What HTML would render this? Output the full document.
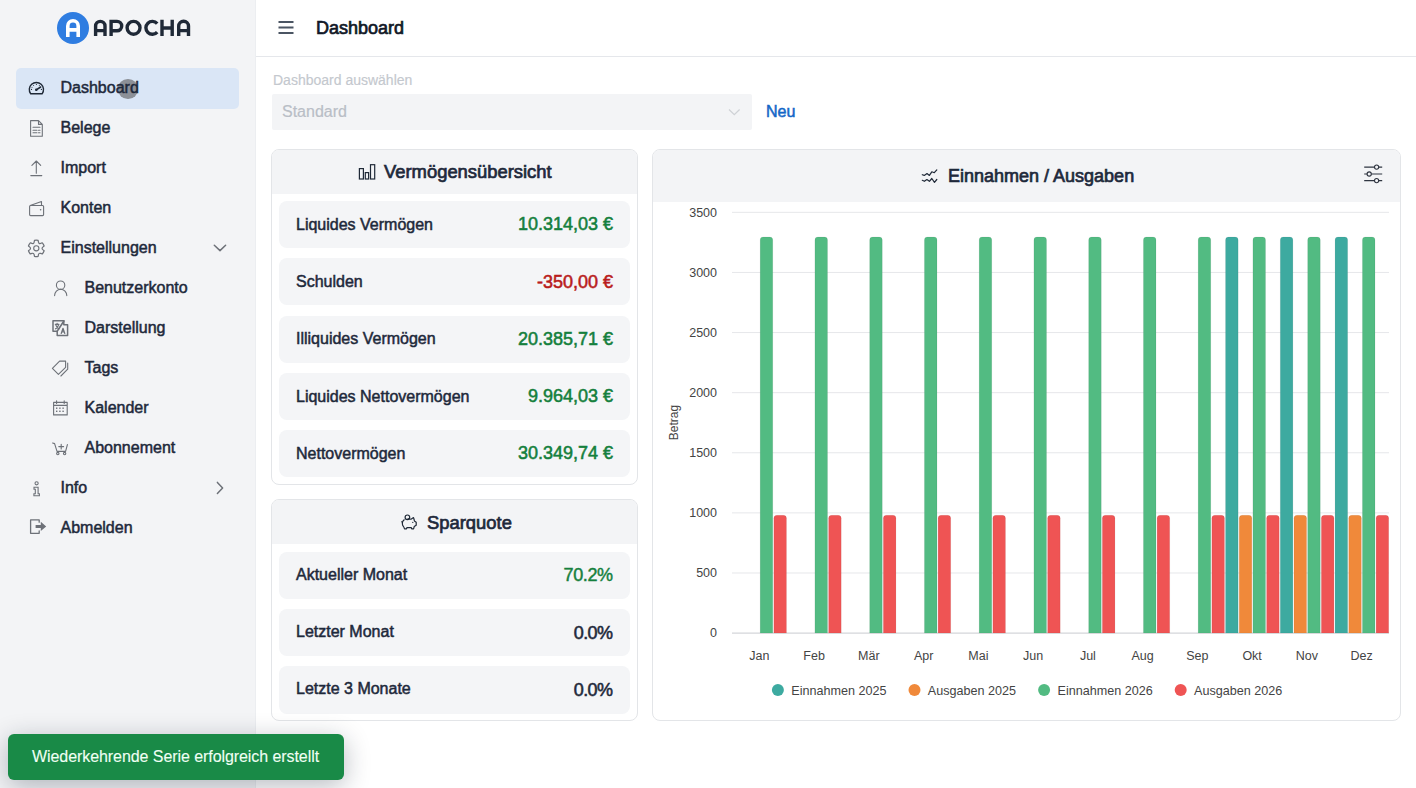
<!DOCTYPE html>
<html><head><meta charset="utf-8">
<style>
*{box-sizing:border-box;margin:0;padding:0}
html,body{width:1416px;height:788px;overflow:hidden;background:#fff;font-family:"Liberation Sans",sans-serif;color:#1f2937}
.abs{position:absolute}
.t{position:absolute;white-space:nowrap;-webkit-text-stroke:0.5px currentColor}
.sb6{-webkit-text-stroke:0.7px currentColor}
#sb{position:absolute;left:0;top:0;width:256px;height:788px;background:#f3f4f6;border-right:1px solid #eceef1}
.nav{position:absolute;left:60.5px;font-size:16px;line-height:20px;color:#1e293b;margin-top:1px}
.sub{left:84.5px}
.ico{position:absolute;overflow:visible}
#hdr{position:absolute;left:256px;top:0;width:1160px;height:57px;border-bottom:1px solid #e5e7eb;background:#fff}
.card{position:absolute;border:1px solid #e3e5e8;border-radius:8px;background:#fff;overflow:hidden}
.chd{position:absolute;left:0;top:0;right:0;background:#f3f4f6}
.item{position:absolute;left:7px;right:7px;height:47.2px;background:#f4f5f7;border-radius:8px}
.lab{position:absolute;left:17px;font-size:16px;line-height:20px;color:#1e293b}
.val{position:absolute;right:17px;font-size:18px;line-height:22px;-webkit-text-stroke:0.55px currentColor}
.g{color:#15803d}.r{color:#b91c1c}
</style></head><body>

<!-- SIDEBAR -->
<div id="sb">
  <!-- logo -->
  <svg class="ico" style="left:0;top:0" width="256" height="60" viewBox="0 0 256 60">
    <circle cx="73" cy="28" r="16" fill="#2f7de1"/>
    <path d="M67.8 37V26A5.2 5.2 0 0 1 78.2 26V37 M67.8 29.9H78.2" fill="none" stroke="#fff" stroke-width="3.6"/>
    <g fill="none" stroke="#1f2937" stroke-width="3.4">
      <path d="M95.6 36V26.1A4.7 4.7 0 0 1 105 26.1V36 M95.6 30.6H105"/>
      <path d="M111.1 36V21.4H117A4.7 4.7 0 0 1 117 30.8H111.1"/>
      <circle cx="133.55" cy="27.85" r="6.45"/>
      <path d="M157.2 23.6A6.45 6.45 0 1 0 157.2 32.1"/>
      <path d="M162 19.7V36 M172.2 19.7V36 M162 28H172.2"/>
      <path d="M178.7 36V26.1A4.7 4.7 0 0 1 188.5 26.1V36 M178.7 30.6H188.5"/>
    </g>
  </svg>
  <div class="abs" style="left:16px;top:68px;width:223px;height:41px;background:#dae6f6;border-radius:5px"></div>

  <div class="abs" style="left:118.3px;top:79px;width:19.6px;height:19.6px;border-radius:50%;background:#8c9097"></div>
  <div class="t nav" style="top:77px">Dashboard</div>
  <div class="t nav" style="top:117px">Belege</div>
  <div class="t nav" style="top:157px">Import</div>
  <div class="t nav" style="top:197px">Konten</div>
  <div class="t nav" style="top:237px">Einstellungen</div>
  <div class="t nav sub" style="top:277px">Benutzerkonto</div>
  <div class="t nav sub" style="top:317px">Darstellung</div>
  <div class="t nav sub" style="top:357px">Tags</div>
  <div class="t nav sub" style="top:397px">Kalender</div>
  <div class="t nav sub" style="top:437px">Abonnement</div>
  <div class="t nav" style="top:477px">Info</div>
  <div class="t nav" style="top:517px">Abmelden</div>

  <!-- icons -->
  <svg class="ico" style="left:0;top:0" width="256" height="560" viewBox="0 0 256 560" fill="none" stroke-linecap="round" stroke-linejoin="round">
    <!-- gauge -->
    <g stroke="#1f2937" stroke-width="1.4">
      <path d="M30.68 93.8A7.1 7.1 0 1 1 42.12 93.8Z"/>
      <path d="M36.3 89.8L40.6 87" stroke-width="1.6"/>
    </g>
    <circle cx="36.3" cy="89.8" r="1.3" fill="#1f2937"/>
    <g fill="#1f2937"><circle cx="36.4" cy="84.3" r=".6"/><circle cx="33.6" cy="85.4" r=".5"/><circle cx="39.3" cy="85.4" r=".5"/><circle cx="31.5" cy="89.4" r=".6"/><circle cx="41.4" cy="89.4" r=".6"/><circle cx="32" cy="87.2" r=".5"/></g>
    <g stroke="#6d7178" stroke-width="1.1">
      <!-- doc -->
      <path d="M30.6 120.6H38.5L42.3 124.4V136.3H30.6Z M38.5 120.6V124.4H42.3"/>
      <path d="M33 127.2H40 M33 130.3H37 M38.5 130.3H40 M33 132.8H37 M38.5 132.8H40"/>
      <!-- upload -->
      <path d="M36.3 161V173.3 M31.9 165.4L36.3 161L40.7 165.4 M30.8 175.6H41.8"/>
      <!-- wallet -->
      <path d="M29.6 206.5V214.6A1 1 0 0 0 30.6 215.6H42.6A1 1 0 0 0 43.6 214.6V206.5A1 1 0 0 0 42.6 205.5H30.6A1 1 0 0 0 29.6 206.5 M30.2 205.4L41.5 201.6V205.4"/>
    </g>
    <circle cx="40.6" cy="209.8" r=".8" fill="#6d7178"/>
    <!-- gear -->
    <g stroke="#6d7178" stroke-width="1.1">
      <path d="M34.15 242.16L34.46 240.41A8.20 8.20 0 0 1 38.14 240.41L38.45 242.16Q38.85 243.98 40.63 243.42L42.30 242.81A8.20 8.20 0 0 1 44.14 246.00L42.78 247.14Q41.40 248.40 42.78 249.66L44.14 250.80A8.20 8.20 0 0 1 42.30 253.99L40.63 253.38Q38.85 252.82 38.45 254.64L38.14 256.39A8.20 8.20 0 0 1 34.46 256.39L34.15 254.64Q33.75 252.82 31.97 253.38L30.30 253.99A8.20 8.20 0 0 1 28.46 250.80L29.82 249.66Q31.20 248.40 29.82 247.14L28.46 246.00A8.20 8.20 0 0 1 30.30 242.81L31.97 243.42Q33.75 243.98 34.15 242.16Z" stroke-width="1.2"/>
      <circle cx="36.3" cy="248.3" r="2.6"/>
    </g>
    <!-- chevron down -->
    <path d="M214.3 245.3L220 250.6L225.6 245.3" stroke="#6d7178" stroke-width="1.5"/>
    <g stroke="#6d7178" stroke-width="1.1">
      <!-- user -->
      <circle cx="60.6" cy="285.2" r="4.2"/>
      <path d="M54.6 295.6A6.1 6.4 0 0 1 66.8 295.6"/>
      <!-- translate -->
      <path d="M57.2 331.3H53V320.8H63.8V324.8H67.6V335.4H57.2Z" stroke-width="1.5"/>
    </g>
    <path d="M63.9 321L57.1 331.4" stroke="#6d7178" stroke-width="1.7"/>
    <path d="M55.3 324.3H59 M57.1 323.3V324.3 M55.9 325.2C56.5 327.3 57.6 328.4 59 328.9 M58.5 325.2C58 327 57 328.3 55.5 328.9" stroke="#6d7178" stroke-width="1.15"/>
    <path d="M61.2 333.5L63 328.3L64.8 333.5 M61.8 331.9H64.2" stroke="#6d7178" stroke-width="1.2"/>
    <g stroke="#6d7178" stroke-width="1.1">
      <!-- tags -->
      <path d="M52.4 368.4L59.6 361.1H65.6V367.4L58.4 374.4Z"/>
      <path d="M67.7 363V369.2L60.9 376"/>
      <!-- calendar -->
      <path d="M53.6 402.4H67.2V414.9H53.6Z M53.6 405.4H67.2 M56.6 400.8V403.4 M64.2 400.8V403.4"/>
      <!-- cart -->
      <path d="M52.6 443L54.6 443.6L57 451.4H65.6L67.4 444.6 M61.2 444.2V449 M58.8 446.6H63.6"/>
      <circle cx="57.8" cy="453.6" r="1.2"/>
      <circle cx="64.6" cy="453.6" r="1.2"/>
    </g>
    <g fill="#6d7178"><rect x="56" y="407.5" width="1.4" height="1.4"/><rect x="59.2" y="407.5" width="1.4" height="1.4"/><rect x="62.4" y="407.5" width="1.4" height="1.4"/><rect x="56" y="410.6" width="1.4" height="1.4"/><rect x="59.2" y="410.6" width="1.4" height="1.4"/><rect x="62.4" y="410.6" width="1.4" height="1.4"/></g>
    <g stroke="#6d7178" stroke-width="1.1">
      <!-- info -->
      <circle cx="36.6" cy="483.3" r="1.6" stroke-width="1.1"/>
      <path d="M34 487.2H38.1V493.7H39.4V495.7H33.9V493.7H35.3V489.3H34Z" stroke-width="1.1" stroke-linejoin="miter"/>
      <!-- logout -->
      <path d="M39.2 522.2V519.9H30.6V533.3H39.2V531" stroke-width="1.3"/>
    </g>
    <path d="M35.6 524.9H40.8V521.8L46.2 526.4L40.8 531V527.9H35.6Z" fill="#6d7178"/>
    <path d="M217.4 482.4L222.6 487.9L217.4 493.4" stroke="#6d7178" stroke-width="1.5"/>
  </svg>
</div>

<!-- HEADER -->
<div id="hdr">
  <svg class="ico" style="left:0;top:0" width="60" height="56" viewBox="256 0 60 56"><path d="M278.5 22H293.5 M278.5 27.5H293.5 M278.5 33H293.5" stroke="#4b5563" stroke-width="2"/></svg>
  <div class="t sb6" style="left:60px;top:17px;font-size:18px;line-height:22px;color:#111827">Dashboard</div>
</div>

<!-- select row -->
<div class="t" style="left:273px;top:69.9px;font-size:14px;line-height:20px;color:#c4c8ce;-webkit-text-stroke:0.15px #c4c8ce">Dashboard auswählen</div>
<div class="abs" style="left:272px;top:94px;width:480px;height:36px;background:#f3f4f6;border-radius:2px"></div>
<div class="t" style="left:282px;top:101.9px;font-size:16px;line-height:20px;color:#b9bec6;-webkit-text-stroke:0.2px #b9bec6">Standard</div>
<svg class="ico" style="left:726px;top:106px" width="16" height="12" viewBox="726 106 16 12"><path d="M729 109.5L734.3 114.6L739.6 109.5" fill="none" stroke="#cfd2d6" stroke-width="1.3"/></svg>
<div class="t" style="left:766px;top:101.9px;font-size:16px;line-height:20px;color:#1466c7;-webkit-text-stroke:0.5px #1466c7">Neu</div>

<!-- CARD 1 -->
<div class="card" style="left:271px;top:149px;width:367px;height:336px">
  <div class="chd" style="height:44px"></div>
  <svg class="ico" style="left:0;top:0" width="120" height="44" viewBox="272 150 120 44"><g fill="none" stroke="#1f2937" stroke-width="1.2"><rect x="359.4" y="168.6" width="4" height="10.4"/><rect x="365.3" y="172.6" width="3.3" height="6.4"/><rect x="370.5" y="164.7" width="4.2" height="14.3"/></g></svg>
  <div class="t sb6" style="left:112px;top:10.8px;font-size:18.4px;line-height:22px;color:#1e293b">Vermögensübersicht</div>
  <div class="item" style="top:51px"><div class="t lab" style="top:13.9px">Liquides Vermögen</div><div class="t val g" style="top:12.3px">10.314,03 €</div></div>
  <div class="item" style="top:108.3px"><div class="t lab" style="top:13.9px">Schulden</div><div class="t val r" style="top:12.3px">-350,00 €</div></div>
  <div class="item" style="top:165.6px"><div class="t lab" style="top:13.9px">Illiquides Vermögen</div><div class="t val g" style="top:12.3px">20.385,71 €</div></div>
  <div class="item" style="top:222.9px"><div class="t lab" style="top:13.9px">Liquides Nettovermögen</div><div class="t val g" style="top:12.3px">9.964,03 €</div></div>
  <div class="item" style="top:280.2px"><div class="t lab" style="top:13.9px">Nettovermögen</div><div class="t val g" style="top:12.3px">30.349,74 €</div></div>
</div>

<!-- CARD 2 -->
<div class="card" style="left:271px;top:499px;width:367px;height:222px">
  <div class="chd" style="height:44px"></div>
  <svg class="ico" style="left:0;top:0" width="160" height="44" viewBox="272 500 160 44"><g fill="none" stroke="#1f2937" stroke-width="1.2" stroke-linejoin="round"><circle cx="407.4" cy="517.3" r="2.3"/><path d="M404.5 519.6C402.6 521 402 523 402.6 525C403.2 526.5 404 527 404.5 528.8H406.5L407 527.6H411.2L411.7 528.8H413.6L414.2 526.6L416.2 525.3V522.2L414.4 521C414.2 519.6 413.8 518.6 413.5 517.6L411 519.2C410 518.9 408.8 518.8 407.5 518.9"/><path d="M402.6 523L401.6 521.3"/></g><circle cx="412.8" cy="522.4" r=".6" fill="#1f2937"/></svg>
  <div class="t sb6" style="left:155px;top:12px;font-size:18.4px;line-height:22px;color:#1e293b">Sparquote</div>
  <div class="item" style="top:51.8px"><div class="t lab" style="top:12.9px">Aktueller Monat</div><div class="t val g" style="top:12.1px;right:17.4px;letter-spacing:-0.4px;-webkit-text-stroke:0.45px #15803d">70.2%</div></div>
  <div class="item" style="top:109.1px"><div class="t lab" style="top:12.9px">Letzter Monat</div><div class="t val" style="top:12.9px;right:17.6px;letter-spacing:-0.6px;color:#1e293b">0.0%</div></div>
  <div class="item" style="top:166.4px"><div class="t lab" style="top:12.9px">Letzte 3 Monate</div><div class="t val" style="top:12.9px;right:17.6px;letter-spacing:-0.6px;color:#1e293b">0.0%</div></div>
</div>

<!-- CARD 3 chart -->
<div class="card" style="left:652px;top:149px;width:749px;height:572px">
  <div class="chd" style="height:52px"></div>
  <div class="t sb6" style="left:295px;top:14.8px;font-size:18px;line-height:22px;color:#1e293b">Einnahmen / Ausgaben</div>
</div>
<svg class="ico" style="left:0;top:0" width="1416" height="788" viewBox="0 0 1416 788" id="chart">
  <g fill="none" stroke="#1f2937" stroke-width="1.2" stroke-linejoin="round" stroke-linecap="round">
    <path d="M922.3 174.7L924.3 175.4L927 173.6L929.4 175.4L931.8 171.8L934.3 172.7L936.8 169.9"/>
    <path d="M922.3 180.3L924.4 181.3L926.9 179.5L929.4 181.3L931.8 178.5L934.5 182.3L936.8 179.5"/>
  </g>
  <g fill="none" stroke="#2f3541" stroke-width="1.1">
    <path d="M1364.2 167.1H1382.2 M1364.2 174H1382.2 M1364.2 180.6H1382.2"/>
  </g>
  <g fill="#f3f4f6" stroke="#2f3541" stroke-width="1.1"><circle cx="1376.6" cy="167.1" r="2.1"/><circle cx="1369.2" cy="174" r="2.1"/><circle cx="1376.6" cy="180.6" r="2.1"/></g>
<!--CHART--><g id="grid" stroke-width="1"><path d="M732 633.10H1389" stroke="#c9ccd1"/><path d="M732 572.99H1389" stroke="#e6e7ea"/><path d="M732 512.88H1389" stroke="#e6e7ea"/><path d="M732 452.77H1389" stroke="#e6e7ea"/><path d="M732 392.66H1389" stroke="#e6e7ea"/><path d="M732 332.55H1389" stroke="#e6e7ea"/><path d="M732 272.44H1389" stroke="#e6e7ea"/><path d="M732 212.33H1389" stroke="#e6e7ea"/></g>
<g id="bars"><path d="M760.17 633.1V239.98Q760.17 236.98 763.17 236.98H769.76Q772.76 236.98 772.76 239.98V633.1Z" fill="#52bb82" stroke="rgba(0,0,0,.07)" stroke-width="0.8"/><path d="M773.86 633.1V518.28Q773.86 515.28 776.86 515.28H783.45Q786.45 515.28 786.45 518.28V633.1Z" fill="#ef5454" stroke="rgba(0,0,0,.07)" stroke-width="0.8"/><path d="M814.92 633.1V239.98Q814.92 236.98 817.92 236.98H824.51Q827.51 236.98 827.51 239.98V633.1Z" fill="#52bb82" stroke="rgba(0,0,0,.07)" stroke-width="0.8"/><path d="M828.61 633.1V518.28Q828.61 515.28 831.61 515.28H838.20Q841.20 515.28 841.20 518.28V633.1Z" fill="#ef5454" stroke="rgba(0,0,0,.07)" stroke-width="0.8"/><path d="M869.67 633.1V239.98Q869.67 236.98 872.67 236.98H879.26Q882.26 236.98 882.26 239.98V633.1Z" fill="#52bb82" stroke="rgba(0,0,0,.07)" stroke-width="0.8"/><path d="M883.36 633.1V518.28Q883.36 515.28 886.36 515.28H892.95Q895.95 515.28 895.95 518.28V633.1Z" fill="#ef5454" stroke="rgba(0,0,0,.07)" stroke-width="0.8"/><path d="M924.42 633.1V239.98Q924.42 236.98 927.42 236.98H934.01Q937.01 236.98 937.01 239.98V633.1Z" fill="#52bb82" stroke="rgba(0,0,0,.07)" stroke-width="0.8"/><path d="M938.11 633.1V518.28Q938.11 515.28 941.11 515.28H947.70Q950.70 515.28 950.70 518.28V633.1Z" fill="#ef5454" stroke="rgba(0,0,0,.07)" stroke-width="0.8"/><path d="M979.17 633.1V239.98Q979.17 236.98 982.17 236.98H988.76Q991.76 236.98 991.76 239.98V633.1Z" fill="#52bb82" stroke="rgba(0,0,0,.07)" stroke-width="0.8"/><path d="M992.86 633.1V518.28Q992.86 515.28 995.86 515.28H1002.45Q1005.45 515.28 1005.45 518.28V633.1Z" fill="#ef5454" stroke="rgba(0,0,0,.07)" stroke-width="0.8"/><path d="M1033.92 633.1V239.98Q1033.92 236.98 1036.92 236.98H1043.51Q1046.51 236.98 1046.51 239.98V633.1Z" fill="#52bb82" stroke="rgba(0,0,0,.07)" stroke-width="0.8"/><path d="M1047.61 633.1V518.28Q1047.61 515.28 1050.61 515.28H1057.20Q1060.20 515.28 1060.20 518.28V633.1Z" fill="#ef5454" stroke="rgba(0,0,0,.07)" stroke-width="0.8"/><path d="M1088.67 633.1V239.98Q1088.67 236.98 1091.67 236.98H1098.26Q1101.26 236.98 1101.26 239.98V633.1Z" fill="#52bb82" stroke="rgba(0,0,0,.07)" stroke-width="0.8"/><path d="M1102.36 633.1V518.28Q1102.36 515.28 1105.36 515.28H1111.95Q1114.95 515.28 1114.95 518.28V633.1Z" fill="#ef5454" stroke="rgba(0,0,0,.07)" stroke-width="0.8"/><path d="M1143.42 633.1V239.98Q1143.42 236.98 1146.42 236.98H1153.01Q1156.01 236.98 1156.01 239.98V633.1Z" fill="#52bb82" stroke="rgba(0,0,0,.07)" stroke-width="0.8"/><path d="M1157.11 633.1V518.28Q1157.11 515.28 1160.11 515.28H1166.70Q1169.70 515.28 1169.70 518.28V633.1Z" fill="#ef5454" stroke="rgba(0,0,0,.07)" stroke-width="0.8"/><path d="M1198.17 633.1V239.98Q1198.17 236.98 1201.17 236.98H1207.76Q1210.76 236.98 1210.76 239.98V633.1Z" fill="#52bb82" stroke="rgba(0,0,0,.07)" stroke-width="0.8"/><path d="M1211.86 633.1V518.28Q1211.86 515.28 1214.86 515.28H1221.45Q1224.45 515.28 1224.45 518.28V633.1Z" fill="#ef5454" stroke="rgba(0,0,0,.07)" stroke-width="0.8"/><path d="M1225.55 633.1V239.98Q1225.55 236.98 1228.55 236.98H1235.14Q1238.14 236.98 1238.14 239.98V633.1Z" fill="#3daaa0" stroke="rgba(0,0,0,.07)" stroke-width="0.8"/><path d="M1239.24 633.1V518.28Q1239.24 515.28 1242.24 515.28H1248.83Q1251.83 515.28 1251.83 518.28V633.1Z" fill="#f0893a" stroke="rgba(0,0,0,.07)" stroke-width="0.8"/><path d="M1252.92 633.1V239.98Q1252.92 236.98 1255.92 236.98H1262.51Q1265.51 236.98 1265.51 239.98V633.1Z" fill="#52bb82" stroke="rgba(0,0,0,.07)" stroke-width="0.8"/><path d="M1266.61 633.1V518.28Q1266.61 515.28 1269.61 515.28H1276.20Q1279.20 515.28 1279.20 518.28V633.1Z" fill="#ef5454" stroke="rgba(0,0,0,.07)" stroke-width="0.8"/><path d="M1280.30 633.1V239.98Q1280.30 236.98 1283.30 236.98H1289.89Q1292.89 236.98 1292.89 239.98V633.1Z" fill="#3daaa0" stroke="rgba(0,0,0,.07)" stroke-width="0.8"/><path d="M1293.99 633.1V518.28Q1293.99 515.28 1296.99 515.28H1303.58Q1306.58 515.28 1306.58 518.28V633.1Z" fill="#f0893a" stroke="rgba(0,0,0,.07)" stroke-width="0.8"/><path d="M1307.67 633.1V239.98Q1307.67 236.98 1310.67 236.98H1317.26Q1320.26 236.98 1320.26 239.98V633.1Z" fill="#52bb82" stroke="rgba(0,0,0,.07)" stroke-width="0.8"/><path d="M1321.36 633.1V518.28Q1321.36 515.28 1324.36 515.28H1330.95Q1333.95 515.28 1333.95 518.28V633.1Z" fill="#ef5454" stroke="rgba(0,0,0,.07)" stroke-width="0.8"/><path d="M1335.05 633.1V239.98Q1335.05 236.98 1338.05 236.98H1344.64Q1347.64 236.98 1347.64 239.98V633.1Z" fill="#3daaa0" stroke="rgba(0,0,0,.07)" stroke-width="0.8"/><path d="M1348.74 633.1V518.28Q1348.74 515.28 1351.74 515.28H1358.33Q1361.33 515.28 1361.33 518.28V633.1Z" fill="#f0893a" stroke="rgba(0,0,0,.07)" stroke-width="0.8"/><path d="M1362.42 633.1V239.98Q1362.42 236.98 1365.42 236.98H1372.01Q1375.01 236.98 1375.01 239.98V633.1Z" fill="#52bb82" stroke="rgba(0,0,0,.07)" stroke-width="0.8"/><path d="M1376.11 633.1V518.28Q1376.11 515.28 1379.11 515.28H1385.70Q1388.70 515.28 1388.70 518.28V633.1Z" fill="#ef5454" stroke="rgba(0,0,0,.07)" stroke-width="0.8"/></g>
<g id="labels" font-family="Liberation Sans" font-size="12" fill="#444"><text x="717" y="637.40" text-anchor="end" font-size="12.5">0</text><text x="717" y="577.29" text-anchor="end" font-size="12.5">500</text><text x="717" y="517.18" text-anchor="end" font-size="12.5">1000</text><text x="717" y="457.07" text-anchor="end" font-size="12.5">1500</text><text x="717" y="396.96" text-anchor="end" font-size="12.5">2000</text><text x="717" y="336.85" text-anchor="end" font-size="12.5">2500</text><text x="717" y="276.74" text-anchor="end" font-size="12.5">3000</text><text x="717" y="216.63" text-anchor="end" font-size="12.5">3500</text><text x="759.38" y="660.2" text-anchor="middle" font-size="12.5">Jan</text><text x="814.12" y="660.2" text-anchor="middle" font-size="12.5">Feb</text><text x="868.88" y="660.2" text-anchor="middle" font-size="12.5">Mär</text><text x="923.62" y="660.2" text-anchor="middle" font-size="12.5">Apr</text><text x="978.38" y="660.2" text-anchor="middle" font-size="12.5">Mai</text><text x="1033.12" y="660.2" text-anchor="middle" font-size="12.5">Jun</text><text x="1087.88" y="660.2" text-anchor="middle" font-size="12.5">Jul</text><text x="1142.62" y="660.2" text-anchor="middle" font-size="12.5">Aug</text><text x="1197.38" y="660.2" text-anchor="middle" font-size="12.5">Sep</text><text x="1252.12" y="660.2" text-anchor="middle" font-size="12.5">Okt</text><text x="1306.88" y="660.2" text-anchor="middle" font-size="12.5">Nov</text><text x="1361.62" y="660.2" text-anchor="middle" font-size="12.5">Dez</text><text transform="translate(678.2 422.5) rotate(-90)" text-anchor="middle">Betrag</text><circle cx="777.9" cy="690" r="6" fill="#3daaa0"/><text x="791.3" y="694.6" font-size="12.6">Einnahmen 2025</text><circle cx="914.5" cy="690" r="6" fill="#f0893a"/><text x="927.8" y="694.6" font-size="12.6">Ausgaben 2025</text><circle cx="1044.1" cy="690" r="6" fill="#52bb82"/><text x="1057.5" y="694.6" font-size="12.6">Einnahmen 2026</text><circle cx="1180.7" cy="690" r="6" fill="#ef5454"/><text x="1194" y="694.6" font-size="12.6">Ausgaben 2026</text></g><!--/CHART-->
</svg>

<!-- TOAST -->
<div class="abs" style="left:8px;top:734px;width:336px;height:46px;background:#198a47;border-radius:6px;box-shadow:0 6px 26px rgba(20,30,50,.30)"></div>
<div class="t" style="left:32px;top:746.6px;font-size:16px;line-height:20px;color:#f0fff4;letter-spacing:-0.07px;-webkit-text-stroke:0.1px #f0fff4">Wiederkehrende Serie erfolgreich erstellt</div>

</body></html>
